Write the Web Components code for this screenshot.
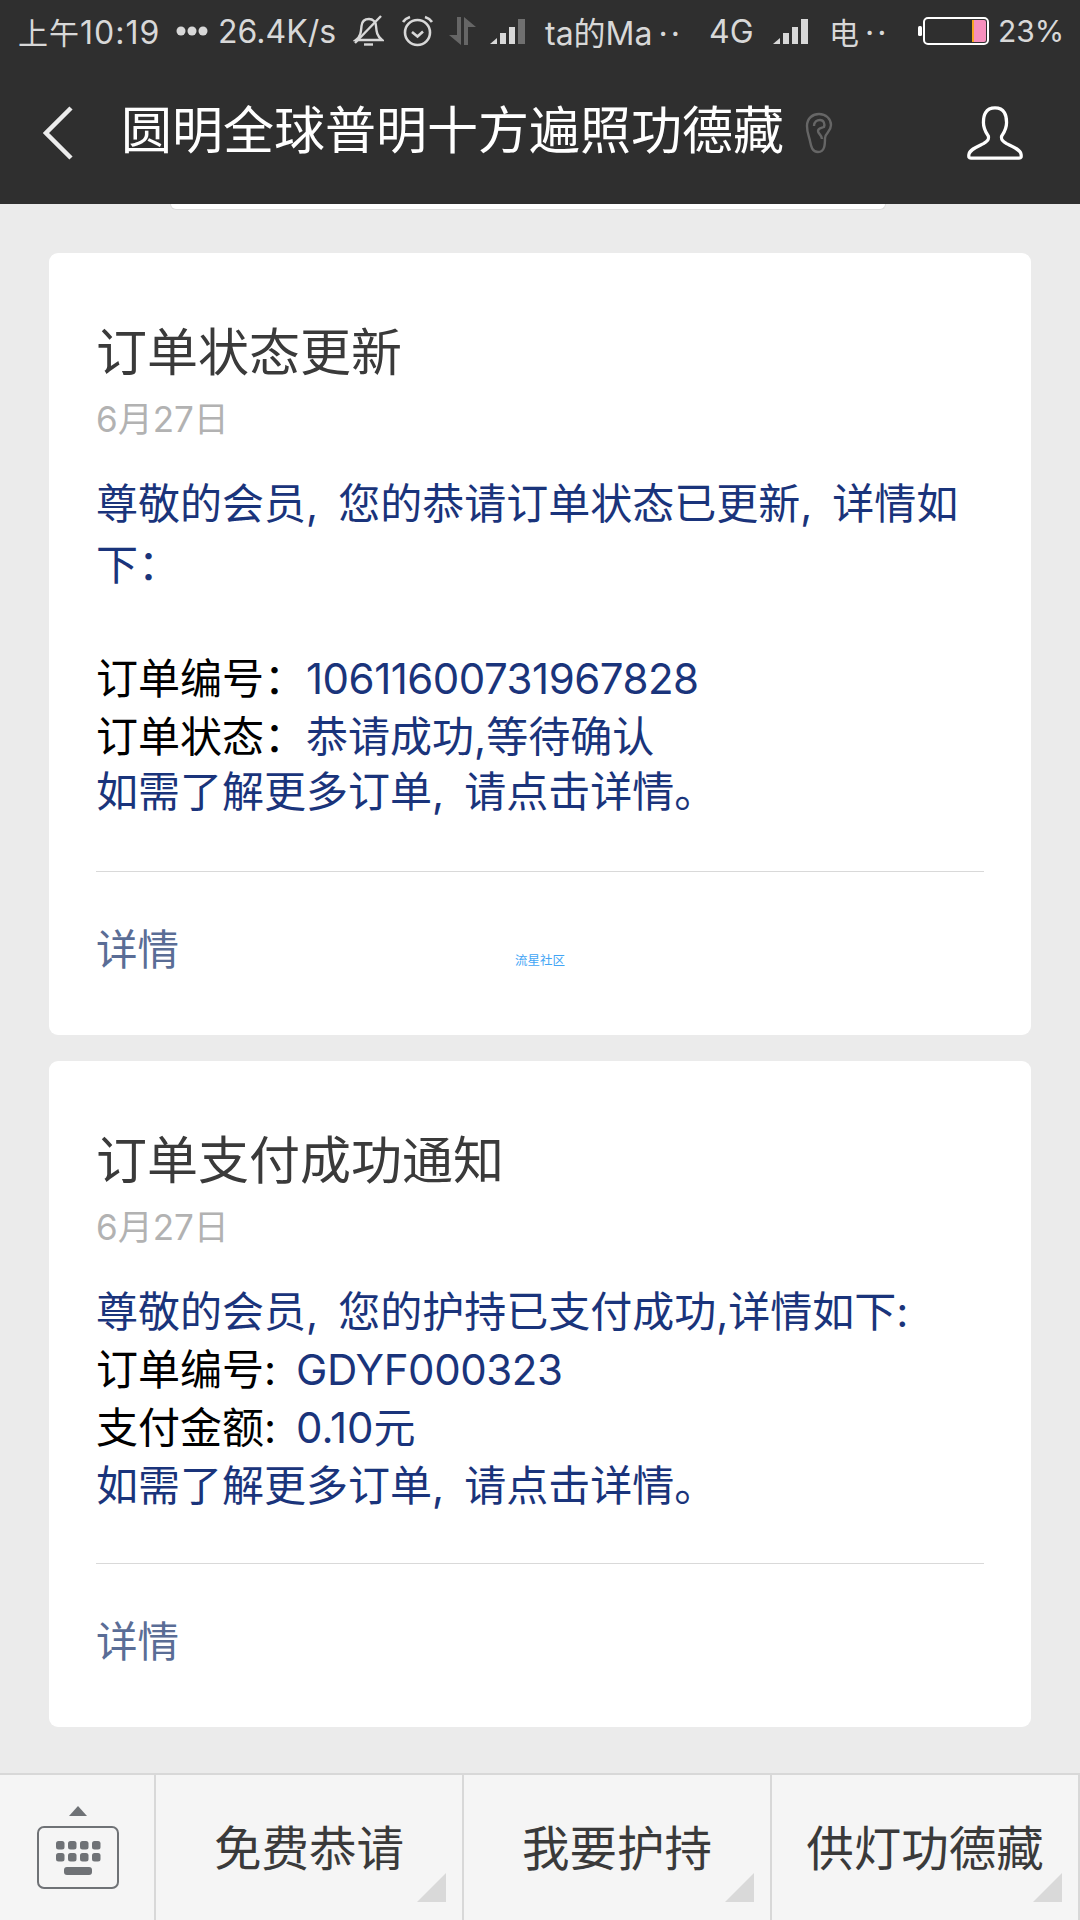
<!DOCTYPE html>
<html lang="zh-CN">
<head>
<meta charset="utf-8">
<title>圆明全球普明十方遍照功德藏</title>
<style>
  html, body { margin: 0; padding: 0; }
  body {
    width: 1080px;
    height: 1920px;
    overflow: hidden;
    background: #ebebeb;
    font-family: Inter, "Noto Sans CJK SC", sans-serif;
    display: flex;
    flex-direction: column;
  }
  msg-card div { height: 58px; white-space: nowrap; }
  msg-card div.blank { height: 56px; }
  msg-card div.wrap { height: 116px; white-space: normal; }
  .k { color: #000; }
  .cm { letter-spacing: 20px; }
  .fw { font-family: "Noto Sans CJK TC", sans-serif; }
  .nc { margin-right: 20px; }
  .n1 { letter-spacing: -0.5px; }
  .n2 { letter-spacing: -0.4px; }
</style>
</head>
<body>
<status-bar></status-bar>
<chat-header>圆明全球普明十方遍照功德藏</chat-header>
<card-stub></card-stub>
<msg-card heading="订单状态更新" date="6月27日" gap="43" tail="50" mark="流星社区">
  <div class="wrap">尊敬的会员<span class="cm">,</span>您的恭请订单状态已更新<span class="cm">,</span>详情如下<span class="fw">：</span></div>
  <div class="blank">&nbsp;</div>
  <div><span class="k">订单编号<span class="fw">：</span></span><span class="n1">10611600731967828</span></div>
  <div><span class="k">订单状态<span class="fw">：</span></span>恭请成功,等待确认</div>
  <div>如需了解更多订单<span class="cm">,</span>请点击详情。</div>
</msg-card>
<msg-card heading="订单支付成功通知" date="6月27日" gap="26" tail="48">
  <div>尊敬的会员<span class="cm">,</span>您的护持已支付成功,详情如下:</div>
  <div><span class="k nc">订单编号:</span><span class="n2">GDYF000323</span></div>
  <div><span class="k nc">支付金额:</span>0.10元</div>
  <div>如需了解更多订单<span class="cm">,</span>请点击详情。</div>
</msg-card>
<menu-bar>
  <menu-button>免费恭请</menu-button>
  <menu-button>我要护持</menu-button>
  <menu-button>供灯功德藏</menu-button>
</menu-bar>

<script>
const signalBars = (last) => `
  <path d="M0 26 L7 20 V26 Z" fill="#d8d8d8"/>
  <rect x="10" y="15" width="6" height="11" fill="#d8d8d8"/>
  <rect x="19" y="9" width="6" height="17" fill="#d8d8d8"/>
  <rect x="28" y="1" width="7" height="25" fill="${last}"/>`;

class StatusBar extends HTMLElement {
  constructor() {
    super();
    this.attachShadow({ mode: "open" });
    this.shadowRoot.innerHTML = `
      <style>
        :host {
          display: flex;
          align-items: center;
          height: 62px;
          background: #2f2f2f;
          color: #d8d8d8;
          font-size: 32px;
          white-space: nowrap;
          padding-left: 18px;
        }
        svg { display: block; flex: none; }
        span { display: block; flex: none; }
        small { font-size: 30px; }
        b { font-weight: 400; letter-spacing: 3px; margin-left: 6px; }
      </style>
      <span style="width:138px;letter-spacing:1px"><small>上午</small>10:19</span>
      <svg style="margin-left:20px" width="32" height="10" viewBox="0 0 32 10">
        <circle cx="5" cy="5" r="4.5" fill="#d8d8d8"/><circle cx="16" cy="5" r="4.5" fill="#d8d8d8"/><circle cx="27" cy="5" r="4.5" fill="#d8d8d8"/>
      </svg>
      <span style="margin-left:10px;width:118px">26.4K/s</span>
      <svg style="margin-left:17px" width="31" height="32" viewBox="0 0 31 32" fill="none" stroke="#d8d8d8" stroke-width="2.4">
        <path d="M3 25 C8 21 8 16 8.5 11 C9 6 12 4 16 4 C20 4 23 7 23 11 C23.5 17 24 21 29 25 Z"/>
        <path d="M11 29.5 H20"/>
        <path d="M2 28 L28 1"/>
      </svg>
      <svg style="margin-left:17px" width="33" height="32" viewBox="0 0 33 32" fill="none" stroke="#d8d8d8" stroke-width="2.6">
        <circle cx="16.5" cy="17.5" r="12.5"/>
        <path d="M11 17 L16.5 21.5 L22 16.5"/>
        <path d="M2 7 C4 4 6 3 9 2"/>
        <path d="M31 7 C29 4 27 3 24 2"/>
      </svg>
      <svg style="margin-left:15px" width="27" height="28" viewBox="0 0 27 28" fill="#666">
        <path d="M8 0 H12 V28 L0 18 H8 Z"/>
        <path d="M15 0 L27 10 H19 V28 H15 Z"/>
      </svg>
      <svg style="margin-left:14px" width="37" height="26" viewBox="0 0 37 26">${signalBars("#707070")}</svg>
      <span style="margin-left:18px;width:133px">ta的Ma<b>··</b></span>
      <span style="margin-left:31px;width:44px">4G</span>
      <svg style="margin-left:20px" width="37" height="26" viewBox="0 0 37 26">${signalBars("#d8d8d8")}</svg>
      <span style="margin-left:19px;width:52px"><small>电</small><b>··</b></span>
      <svg style="margin-left:37px" width="71" height="28" viewBox="0 0 71 28">
        <rect x="0" y="9" width="4" height="10" rx="1.5" fill="#fff"/>
        <rect x="6" y="1" width="64" height="26" rx="4" fill="none" stroke="#fff" stroke-width="2"/>
        <rect x="54" y="3" width="14" height="22" rx="2" fill="#f78fbd"/>
        <rect x="54" y="3" width="2" height="22" fill="#f5a623"/>
      </svg>
      <span style="margin-left:9px;font-size:30px">23%</span>
    `;
  }
}

class ChatHeader extends HTMLElement {
  constructor() {
    super();
    this.attachShadow({ mode: "open" });
    this.shadowRoot.innerHTML = `
      <style>
        :host {
          display: flex;
          align-items: center;
          height: 142px;
          background: #2f2f2f;
          color: #fff;
          font-size: 51px;
          white-space: nowrap;
          padding-left: 43px;
        }
        svg { display: block; flex: none; }
        .title { margin-left: 48px; padding-bottom: 12px; }
      </style>
      <svg width="30" height="54" viewBox="0 0 30 54" fill="none" stroke="#ececec" stroke-width="4.5">
        <path d="M28 2 L3 27 L28 52"/>
      </svg>
      <div class="title"><slot></slot></div>
      <svg style="margin-left:19px" width="30" height="42" viewBox="0 0 30 42" fill="none" stroke="#666" stroke-width="2.4">
        <path d="M4 14 C4 6 10 2 16 2 C23 2 28 7 28 13 C28 20 22 21 22 26 C22 32 22 40 15 40 C9 40 8 34 7 29 C6 24 4 21 4 14 Z"/>
        <path d="M11 14 C11 10 14 8 17 8 C21 8 22 12 21 15 C19 16 15 16 15 19 C15 22 19 23 19 27"/>
      </svg>
      <svg style="margin-left:134px" width="56" height="54" viewBox="0 0 58 56" fill="none" stroke="#fff" stroke-width="3.4" stroke-linejoin="round">
        <path d="M29 2 C19 2 17 10 17 17 C17 24 20 28 22 31 C23 34 22 36 17 39 C11 42 3 45 2 50 C1.5 53 2 54 4 54 H54 C56 54 56.5 53 56 50 C55 45 47 42 41 39 C36 36 35 34 36 31 C38 28 41 24 41 17 C41 10 39 2 29 2 Z"/>
      </svg>
    `;
  }
}

class CardStub extends HTMLElement {
  constructor() {
    super();
    this.attachShadow({ mode: "open" });
    this.shadowRoot.innerHTML = `
      <style>
        :host {
          display: block;
          box-sizing: border-box;
          height: 6px;
          width: 716px;
          margin-left: 170px;
          background: #fff;
          border: 1px solid #dcdcdc;
          border-top: none;
          border-radius: 0 0 14px 14px;
        }
      </style>
    `;
  }
}

class MsgCard extends HTMLElement {
  constructor() {
    super();
    this.attachShadow({ mode: "open" });
    const mark = this.getAttribute("mark");
    this.shadowRoot.innerHTML = `
      <style>
        :host {
          display: block;
          position: relative;
          margin: ${this.getAttribute("gap")}px 49px 0;
          background: #fff;
          border-radius: 9px;
          padding: 70px 47px 0;
        }
        h2 {
          margin: 0;
          font-size: 51px;
          font-weight: 400;
          line-height: 60px;
          color: #3a3a3a;
        }
        .date {
          margin-top: 11px;
          font-size: 35px;
          line-height: 50px;
          color: #b2b2b2;
        }
        .body {
          margin-top: 31px;
          font-size: 42px;
          line-height: 58px;
          color: #1a347b;
        }
        .foot {
          margin-top: ${this.getAttribute("tail")}px;
          border-top: 1px solid #d9d9d9;
          padding: 48px 0 55px;
          font-size: 41.5px;
          line-height: 60px;
          color: #5a6d96;
        }
        .mark {
          position: absolute;
          left: 466px;
          top: 700px;
          font-size: 12.5px;
          line-height: 16px;
          color: #42a5f5;
        }
      </style>
      <h2>${this.getAttribute("heading")}</h2>
      <div class="date">${this.getAttribute("date")}</div>
      <div class="body"><slot></slot></div>
      <div class="foot">详情</div>
      ${mark ? `<div class="mark">${mark}</div>` : ""}
    `;
  }
}

class MenuBar extends HTMLElement {
  constructor() {
    super();
    this.attachShadow({ mode: "open" });
    this.shadowRoot.innerHTML = `
      <style>
        :host {
          display: flex;
          margin-top: auto;
          height: 147px;
          box-sizing: border-box;
          background: #f5f5f5;
          border-top: 2px solid #d8d8d8;
        }
        .kb {
          box-sizing: border-box;
          width: 156px;
          flex: none;
          border-right: 2px solid #d8d8d8;
          padding: 31px 0 0 37px;
        }
        svg { display: block; }
      </style>
      <div class="kb">
        <svg width="82" height="84" viewBox="0 0 82 84" fill="#6f7276">
          <path d="M32 10 L41 0 L50 10 Z"/>
          <rect x="1" y="21" width="80" height="61" rx="6" fill="none" stroke="#6f7276" stroke-width="2"/>
          <rect x="19" y="35" width="8.5" height="8.5" rx="2.5"/><rect x="31" y="35" width="8.5" height="8.5" rx="2.5"/><rect x="43" y="35" width="8.5" height="8.5" rx="2.5"/><rect x="55" y="35" width="8.5" height="8.5" rx="2.5"/>
          <rect x="19" y="47" width="8.5" height="8.5" rx="2.5"/><rect x="31" y="47" width="8.5" height="8.5" rx="2.5"/><rect x="43" y="47" width="8.5" height="8.5" rx="2.5"/><rect x="55" y="47" width="8.5" height="8.5" rx="2.5"/>
          <rect x="27" y="61" width="28" height="8" rx="3"/>
        </svg>
      </div>
      <slot></slot>
    `;
  }
}

class MenuButton extends HTMLElement {
  constructor() {
    super();
    this.attachShadow({ mode: "open" });
    this.shadowRoot.innerHTML = `
      <style>
        :host {
          display: flex;
          position: relative;
          box-sizing: border-box;
          width: 308px;
          padding-bottom: 4px;
          align-items: center;
          justify-content: center;
          border-right: 2px solid #d8d8d8;
          color: #3a3a3a;
          font-size: 47.5px;
          white-space: nowrap;
        }
        i {
          position: absolute;
          right: 16px;
          bottom: 18px;
          width: 29px;
          height: 29px;
          background: #d9d9d9;
          clip-path: polygon(100% 0, 100% 100%, 0 100%);
        }
      </style>
      <slot></slot>
      <i></i>
    `;
  }
}

customElements.define("status-bar", StatusBar);
customElements.define("chat-header", ChatHeader);
customElements.define("card-stub", CardStub);
customElements.define("msg-card", MsgCard);
customElements.define("menu-bar", MenuBar);
customElements.define("menu-button", MenuButton);
</script>
</body>
</html>
